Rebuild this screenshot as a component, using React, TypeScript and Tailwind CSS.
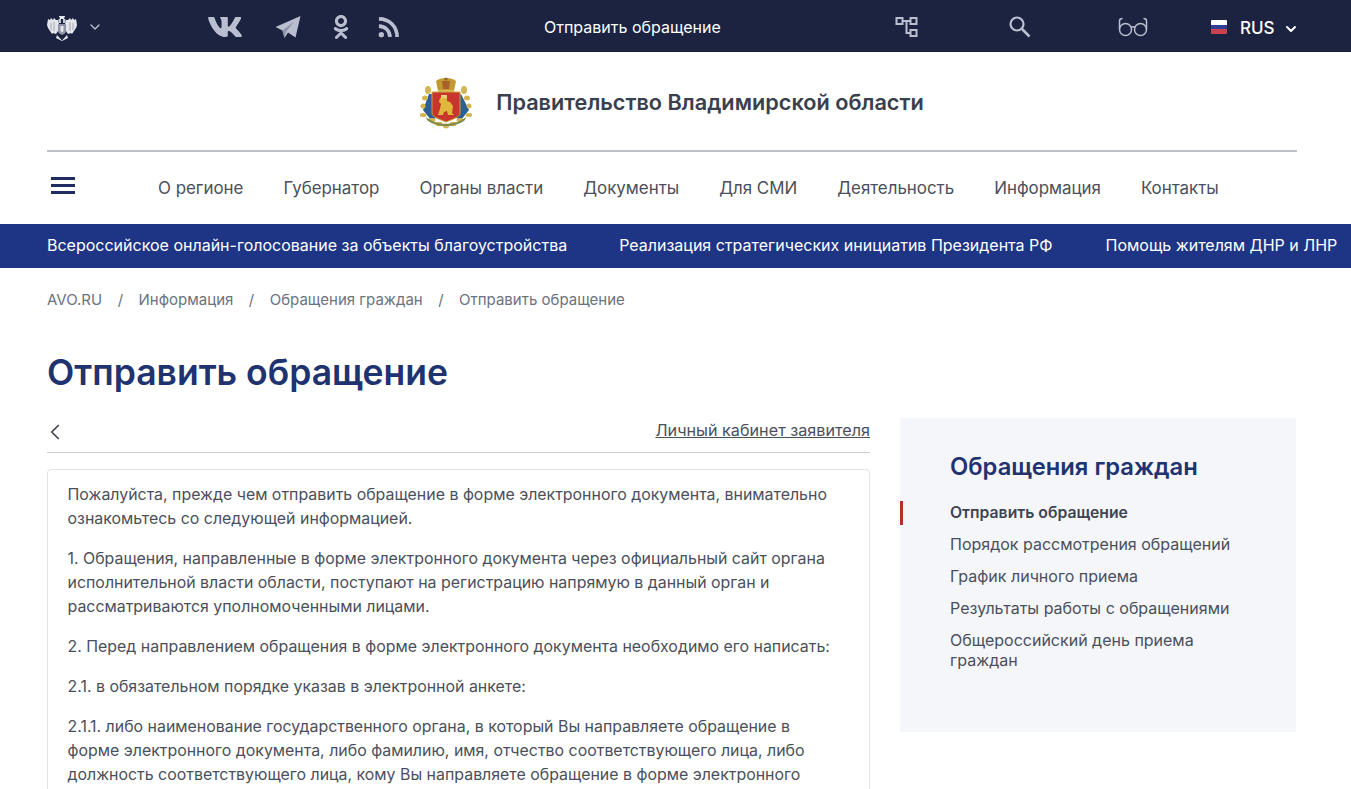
import { ChevronDown, ChevronLeft } from "lucide-react"
import { FaVk, FaOdnoklassniki } from "react-icons/fa"

const navItems = ["О регионе", "Губернатор", "Органы власти", "Документы", "Для СМИ", "Деятельность", "Информация", "Контакты"]
const sideItems = ["Порядок рассмотрения обращений", "График личного приема", "Результаты работы с обращениями"]

function RussianEagle() {
  return (
    <svg viewBox="0 0 30 28" className="h-[28px] w-[30px]">
      <g fill="#e4e6ec">
        <path d="M1 6l2 1 1-2 2 2 1-2 2 2 2 0 1 4-1 7-2 3-3-1-1 1-2-3-2-3-1-3z" />
        <path d="M29 6l-2 1-1-2-2 2-1-2-2 2-2 0-1 4 1 7 2 3 3-1 1 1 2-3 2-3 1-3z" />
        <path d="M12 3h6l-1 3h-4z" />
        <path d="M10 22l5 5.500 5-5.500 1 3-6 3-6-3z" />
      </g>
      <path d="M11 11h8v7c0 2-2 3-4 4-2-1-4-2-4-4z" fill="#8f95a8" />
      <path d="M13.500 13h3v5l-1.500 1.500-1.500-1.500z" fill="#e4e6ec" />
      <path d="M4 10v7M7 9v9M23 9v9M26 10v7" stroke="#8f95a8" strokeWidth="0.8" />
      <path d="M11.500 6h2.500v4h-2.500zM16 6h2.500v4H16z" fill="#c6cad6" />
    </svg>
  )
}

function RegionArms() {
  return (
    <svg viewBox="0 0 52 52" className="h-[52px] w-[52px]">
      <path d="M9 17L3 33l8 10 5-2-2-24zM41 17l8 16-8 10-5-2 2-24z" fill="#2c5f94" />
      <g fill="#d3b652">
        <ellipse cx="8" cy="13" rx="3" ry="4" />
        <ellipse cx="44" cy="13" rx="3" ry="4" />
        <ellipse cx="5" cy="21" rx="3" ry="2.500" />
        <ellipse cx="47" cy="21" rx="3" ry="2.500" />
        <ellipse cx="3" cy="29" rx="2.500" ry="2.500" />
        <ellipse cx="49" cy="29" rx="2.500" ry="2.500" />
        <ellipse cx="3" cy="38" rx="3.500" ry="2" />
        <ellipse cx="49" cy="38" rx="3.500" ry="2" />
        <ellipse cx="12" cy="43" rx="3.500" ry="2" />
        <ellipse cx="40" cy="43" rx="3.500" ry="2" />
        <ellipse cx="19" cy="47" rx="3.500" ry="2.200" />
        <ellipse cx="33" cy="47" rx="3.500" ry="2.200" />
        <ellipse cx="26" cy="49" rx="3" ry="2.500" />
      </g>
      <path d="M6 40c5 4 12 7 20 7s15-3 20-7l-1 3c-5 4-12 6-19 6S12 47 7 43z" fill="#7f8b46" />
      <path d="M16 4c2-2 6-3 10-3s8 1 10 3l-2 10H18z" fill="#c39a32" />
      <path d="M22 4h8l-1 8h-6z" fill="#a8612a" />
      <circle cx="26" cy="2" r="1.600" fill="#8a6a2a" />
      <rect x="18" y="13" width="16" height="2" fill="#d9bd5c" />
      <path d="M12 15h28v21c0 4-7 6-14 9-7-3-14-5-14-9z" fill="#c7352d" stroke="#c9a53f" strokeWidth="1" />
      <path d="M20 21h7v3l3 1 3 4-1 7 2 2h-6l-1-4-3 1-1 3h-5l2-6 1-5-2-2z" fill="#e0b83c" />
      <path d="M21 18h6v3h-6z" fill="#e8d27a" />
    </svg>
  )
}

function SiteMapIcon() {
  return (
    <svg viewBox="0 0 24 22" className="h-[22px] w-[24px]" fill="none" stroke="#b9bfcf" strokeWidth="2">
      <rect x="1.500" y="2" width="6" height="6" />
      <rect x="15.500" y="2" width="6" height="6" />
      <rect x="15.500" y="14" width="6" height="6" />
      <path d="M7.500 5h8M11.500 5v12h4" />
    </svg>
  )
}

function SearchIcon() {
  return (
    <svg viewBox="0 0 24 24" className="h-[24px] w-[24px]" fill="none" stroke="#b9bfcf">
      <circle cx="9" cy="9" r="6.500" strokeWidth="2.200" />
      <path d="M14 14l7.500 7.500" strokeWidth="2.600" />
    </svg>
  )
}

function TelegramIcon() {
  return (
    <svg viewBox="0 0 26 24" className="h-[24px] w-[26px]">
      <path d="M0.500 12L25.500 1 20.500 22.500 13 17.500 9.500 23 7.500 15.500z" fill="#b9bfcf" />
      <path d="M7.500 15.500L19 6.500 11 17 9.500 23z" fill="#8e94a8" />
    </svg>
  )
}

function GlassesIcon() {
  return (
    <svg viewBox="0 0 30 20" className="h-[20px] w-[30px]" fill="none" stroke="#b9bfcf" strokeWidth="1.500">
      <circle cx="7.500" cy="12.500" r="6" />
      <circle cx="22.500" cy="12.500" r="6" />
      <path d="M13 10.500c1.300-1 2.700-1 4 0M1.500 12V4c0-1.500 1-2.500 3-2.500M28.500 12V4c0-1.500-1-2.500-3-2.500" />
    </svg>
  )
}

function RssIcon() {
  return (
    <svg viewBox="0 0 22 22" className="h-[21px] w-[21px]" fill="none" stroke="#b9bfcf" strokeWidth="3.800">
      <circle cx="3.500" cy="18.500" r="2.800" fill="#b9bfcf" stroke="none" />
      <path d="M1 9.500c6.500 0 11.500 5 11.500 11.500M1 2c11 0 19 8 19 19" />
    </svg>
  )
}

export default function App() {
  return (
    <div className="h-screen overflow-hidden bg-white font-['Inter',sans-serif] text-[#4a4f5c]">
      <div className="flex h-[52px] items-center bg-[#1b2340] pl-[47px] pt-[2px]">
        <RussianEagle />
        <ChevronDown className="ml-[10px] h-[16px] w-[16px] text-[#b9bfcf]" />
        <div className="ml-[104px] flex items-center text-[#b9bfcf]">
          <FaVk className="h-[36px] w-[36px]" />
          <div className="ml-[32px]"><TelegramIcon /></div>
          <FaOdnoklassniki className="ml-[28px] h-[24px] w-[24px]" />
          <div className="ml-[25px]"><RssIcon /></div>
        </div>
        <span className="ml-[145px] w-[177px] whitespace-nowrap text-[16px] text-white">Отправить обращение</span>
        <div className="ml-[174px]"><SiteMapIcon /></div>
        <div className="ml-[89px]"><SearchIcon /></div>
        <div className="ml-[86px]"><GlassesIcon /></div>
        <div className="ml-[63px] flex h-[14px] w-[16px] flex-col overflow-hidden rounded-[1px]">
          <div className="h-1/3 bg-white" />
          <div className="h-1/3 bg-[#2f3f96]" />
          <div className="h-1/3 bg-[#c8434f]" />
        </div>
        <span className="ml-[13px] pt-[3px] text-[17px] font-medium text-white">RUS</span>
        <ChevronDown className="ml-[8px] mt-[3px] h-[16px] w-[16px] text-white" strokeWidth={3} />
      </div>

      <div className="mx-[47px] mr-[54px] flex h-[100px] items-center justify-center border-b-2 border-[#bcbfc6] pt-[3px]">
        <RegionArms />
        <span className="ml-[24px] text-[21.7px] font-semibold text-[#3a3f4d]">Правительство Владимирской области</span>
      </div>

      <div className="flex h-[72px] items-center pl-[51px]">
        <div className="mb-[6px] flex w-[24px] flex-col gap-[4px]">
          <div className="h-[3px] bg-[#1f2d5f]" />
          <div className="h-[3px] bg-[#1f2d5f]" />
          <div className="h-[3px] bg-[#1f2d5f]" />
        </div>
        <nav className="ml-[83px] flex gap-[40px] pt-[2px] text-[16.9px] text-[#4a4f5c]">
          {navItems.map((item) => (
            <a key={item}>{item}</a>
          ))}
        </nav>
      </div>

      <div className="flex h-[44px] items-center gap-[52px] overflow-hidden whitespace-nowrap bg-[#1e3585] pb-[2px] pl-[47px] text-[16px] text-white">
        <span>Всероссийское онлайн-голосование за объекты благоустройства</span>
        <span>Реализация стратегических инициатив Президента РФ</span>
        <span className="ml-[1px]">Помощь жителям ДНР и ЛНР</span>
      </div>

      <div className="flex h-[62px] items-center pl-[47px] pt-[2px] text-[15px] text-[#6b7280]">
        <span>AVO.RU</span>
        <span className="mx-[15.5px]">/</span>
        <span>Информация</span>
        <span className="mx-[15.5px]">/</span>
        <span>Обращения граждан</span>
        <span className="mx-[15.5px]">/</span>
        <span>Отправить обращение</span>
      </div>

      <h1 className="pl-[47px] pt-[19px] text-[35.5px] font-semibold leading-[48px] text-[#1f3370]">Отправить обращение</h1>

      <div className="mt-[21px] flex items-start pl-[47px]">
        <div className="w-[823px]">
          <div className="flex h-[35px] items-center justify-between border-b border-[#c9cbd0] pb-[6px]">
            <ChevronLeft className="-ml-[5px] h-[26px] w-[26px] text-[#3f4450]" strokeWidth={1.6} />
            <a className="mb-[4px] text-[16.2px] text-[#4a4f5c] underline">Личный кабинет заявителя</a>
          </div>
          <div className="mt-[16px] rounded-[4px] border border-[#e2e3e6] pb-[40px] pl-[19.5px] pr-[30px] pt-[13px] text-[15.92px] leading-[24px]">
            <p>Пожалуйста, прежде чем отправить обращение в форме электронного документа, внимательно ознакомьтесь со следующей информацией.</p>
            <p className="mt-[16px]">1. Обращения, направленные в форме электронного документа через официальный сайт органа исполнительной власти области, поступают на регистрацию напрямую в данный орган и рассматриваются уполномоченными лицами.</p>
            <p className="mt-[16px]">2. Перед направлением обращения в форме электронного документа необходимо его написать:</p>
            <p className="mt-[16px]">2.1. в обязательном порядке указав в электронной анкете:</p>
            <p className="mt-[16px]">2.1.1. либо наименование государственного органа, в который Вы направляете обращение в форме электронного документа, либо фамилию, имя, отчество соответствующего лица, либо должность соответствующего лица, кому Вы направляете обращение в форме электронного</p>
          </div>
        </div>

        <aside className="ml-[30px] h-[314px] w-[396px] bg-[#f4f6fa] pt-[34px]">
          <h2 className="pl-[50px] text-[23.75px] font-semibold leading-[30px] text-[#1f3370]">Обращения граждан</h2>
          <div className="mt-[19px] flex h-[24px] items-center border-l-[3px] border-[#b3302c] pl-[47px] text-[15.75px] font-semibold text-[#3f4450]">
            Отправить обращение
          </div>
          <div className="mt-[7px] flex flex-col gap-[8px] px-[50px] text-[16px] leading-[24px]">
            {sideItems.map((item) => (
              <a key={item}>{item}</a>
            ))}
            <a className="mt-[2px] leading-[20px]">Общероссийский день приема граждан</a>
          </div>
        </aside>
      </div>
    </div>
  )
}
